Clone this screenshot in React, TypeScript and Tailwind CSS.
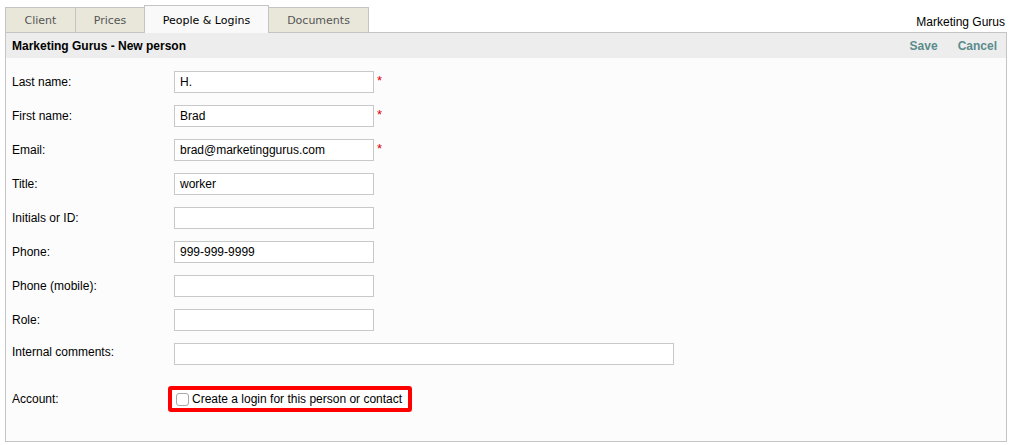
import React from 'react';

const rows: { label: string; value: string; req?: boolean; wide?: boolean }[] = [
  { label: 'Last name:', value: 'H.', req: true },
  { label: 'First name:', value: 'Brad', req: true },
  { label: 'Email:', value: 'brad@marketinggurus.com', req: true },
  { label: 'Title:', value: 'worker' },
  { label: 'Initials or ID:', value: '' },
  { label: 'Phone:', value: '999-999-9999' },
  { label: 'Phone (mobile):', value: '' },
  { label: 'Role:', value: '' },
  { label: 'Internal comments:', value: '', wide: true },
];

const tabs = [
  { name: 'Client', w: 'w-[71px]' },
  { name: 'Prices', w: 'w-[70px]' },
  { name: 'People & Logins', w: 'w-[125px]', active: true },
  { name: 'Documents', w: 'w-[101px]' },
];

export default function App() {
  return (
    <div className="w-[1013px] h-[445px] bg-white text-[12px] text-black font-['Liberation_Sans',Arial,sans-serif]">
      <div className="flex items-end justify-between h-[32px] pl-[5px] pr-[8px]">
        <div className="flex items-end">
          {tabs.map((t) =>
            t.active ? (
              <div
                key={t.name}
                className={`${t.w} h-[28px] -ml-px flex items-center justify-center border border-b-0 border-[#c4c4c4] bg-[#f9f9f9] text-black font-['DejaVu_Sans',Verdana,sans-serif] text-[11px] relative z-10 mb-[-1px] pt-[3px]`}
              >
                {t.name}
              </div>
            ) : (
              <div
                key={t.name}
                className={`${t.w} h-[25px] -ml-px first:ml-0 flex items-center justify-center border border-b-0 border-[#c4c4c4] bg-[#e8e7da] text-[#555] font-['DejaVu_Sans',Verdana,sans-serif] text-[11px] pt-[2px]`}
              >
                {t.name}
              </div>
            )
          )}
        </div>
        <div className="pb-[4px] leading-none">Marketing Gurus</div>
      </div>
      <div className="ml-[5px] w-[1002px] h-[410px] border border-[#c4c4c4] bg-[#fcfcfc]">
        <div className="h-[25px] bg-[#ededed] flex items-center justify-between pl-[6px] pr-[9px]">
          <div className="font-bold">Marketing Gurus - New person</div>
          <div className="flex gap-[20px] font-bold text-[#5b8c8c]">
            <span>Save</span>
            <span>Cancel</span>
          </div>
        </div>
        <div className="pt-[13px] flex flex-col gap-[12px]">
          {rows.map((r) => (
            <div key={r.label} className="flex items-center h-[22px]">
              <div className={`w-[168px] pl-[6px] shrink-0 ${r.wide ? 'mb-[5px]' : ''}`}>{r.label}</div>
              <div
                className={`${r.wide ? 'w-[500px]' : 'w-[200px]'} h-[22px] border border-[#c8c8c8] bg-white flex items-center pl-[5px]`}
              >
                {r.value}
              </div>
              {r.req && (
                <span className="self-start mt-[3px] ml-[3px] text-[#e00000] text-[13px] leading-none">*</span>
              )}
            </div>
          ))}
        </div>
        <div className="flex items-center mt-[21px] h-[26px]">
          <div className="w-[162px] pl-[6px] shrink-0">Account:</div>
          <div className="flex items-center h-[26px] w-[244px] border-[4px] border-[#ff0000] rounded-[3px] bg-white pl-[4px]">
            <span className="w-[13px] h-[13px] border border-[#a8a8a8] rounded-[3px] bg-white shrink-0" />
            <span className="ml-[3px]">Create a login for this person or contact</span>
          </div>
        </div>
      </div>
    </div>
  );
}
